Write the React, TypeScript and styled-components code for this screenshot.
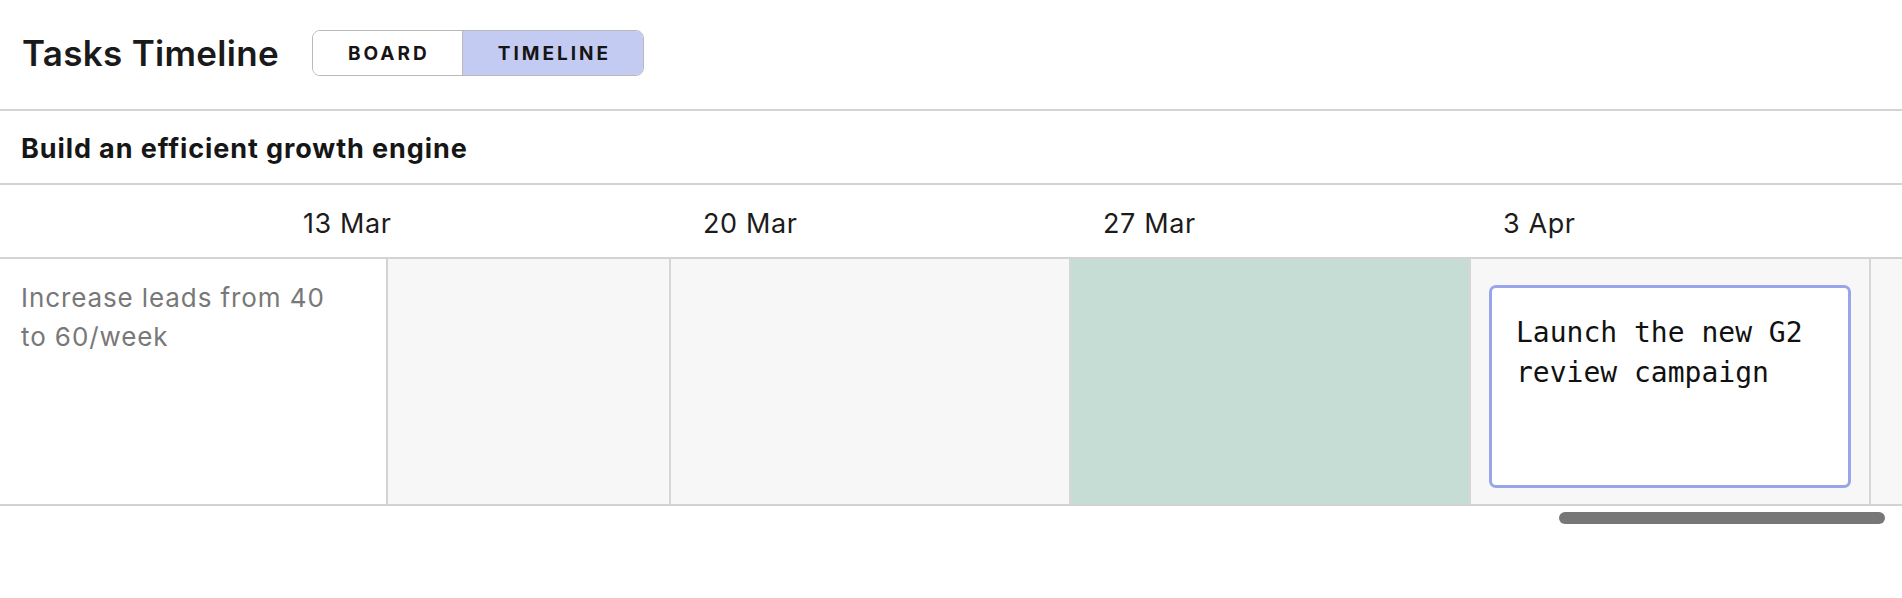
import React from "react";
import styled, { createGlobalStyle } from "styled-components";

const GlobalStyle = createGlobalStyle`
  html, body {
    margin: 0;
    padding: 0;
    background: #ffffff;
  }
  body {
    font-family: Inter, "Noto Sans", "Liberation Sans", sans-serif;
    color: #1a1a1a;
    -webkit-font-smoothing: antialiased;
  }
  * { box-sizing: border-box; }
`;

const Page = styled.div`
  width: 1902px;
  height: 598px;
  overflow: hidden;
  background: #ffffff;
`;

const TopBar = styled.header`
  display: flex;
  align-items: center;
  gap: 33px;
  height: 111px;
  padding: 0 0 3px 22px;
  border-bottom: 2px solid #d3d3d3;
`;

const Title = styled.h1`
  margin: 0;
  font-size: 35px;
  font-weight: 600;
  letter-spacing: 0.3px;
  color: #1a1a1a;
`;

const Toggle = styled.div`
  display: flex;
  height: 46px;
  border: 1.5px solid #b9b9b9;
  border-radius: 8px;
  overflow: hidden;
`;

const ToggleButton = styled.button<{ $active?: boolean }>`
  display: flex;
  align-items: center;
  padding: 0 32px 0 35px;
  border: none;
  border-left: ${(p) => (p.$active ? "1.5px solid #b9b9b9" : "none")};
  background: ${(p) => (p.$active ? "#c3cbf2" : "#ffffff")};
  font-family: Inter, "Noto Sans", sans-serif;
  font-size: 19px;
  font-weight: 700;
  letter-spacing: 3px;
  color: #151515;
  cursor: pointer;
`;

const GoalBar = styled.div`
  display: flex;
  align-items: center;
  height: 74px;
  padding: 2px 0 0 21px;
  border-bottom: 2px solid #d3d3d3;
  font-size: 27px;
  font-weight: 700;
  letter-spacing: 0.9px;
  color: #161616;
`;

const Timeline = styled.section`
  display: flex;
  flex-direction: column;
  overflow: hidden;
`;

const HeaderRow = styled.div`
  display: flex;
  height: 74px;
  border-bottom: 2px solid #d3d3d3;
`;

const Corner = styled.div`
  flex: 0 0 270px;
`;

const DateCell = styled.div`
  flex: 0 0 400px;
  display: flex;
  align-items: center;
  padding: 4px 0 0 33px;
  font-size: 27px;
  font-weight: 400;
  letter-spacing: 0.6px;
  color: #1c1c1c;
`;

const BodyRow = styled.div`
  display: flex;
  height: 247px;
  border-bottom: 2px solid #d3d3d3;
`;

const RowLabel = styled.div`
  flex: 0 0 388px;
  padding: 19px 30px 0 21px;
  border-right: 2px solid #d3d3d3;
  background: #ffffff;
  font-size: 26px;
  letter-spacing: 0.9px;
  line-height: 39px;
  color: #787878;
`;

const WeekCell = styled.div<{ $width: number; $tone: "plain" | "active" }>`
  flex: 0 0 ${(p) => p.$width}px;
  display: flex;
  padding: 26px 18px 16px;
  border-right: 2px solid #d6d6d6;
  background: ${(p) => (p.$tone === "active" ? "#c6ddd6" : "#f7f7f7")};
`;

const TaskCard = styled.div`
  flex: 1;
  padding: 25px 24px 24px;
  border: 3px solid #99a5e8;
  border-radius: 7px;
  background: #ffffff;
  font-family: "DejaVu Sans Mono", "Liberation Mono", monospace;
  font-size: 28px;
  line-height: 40px;
  color: #111111;
`;

const ScrollTrack = styled.div`
  display: flex;
  justify-content: flex-end;
  padding: 6px 17px 0 0;
`;

const ScrollThumb = styled.div`
  width: 326px;
  height: 12px;
  border-radius: 6px;
  background: #777777;
`;

const dates = ["13 Mar", "20 Mar", "27 Mar", "3 Apr", ""];

const weeks: { width: number; tone: "plain" | "active"; task?: string }[] = [
  { width: 283, tone: "plain" },
  { width: 400, tone: "plain" },
  { width: 400, tone: "active" },
  { width: 400, tone: "plain", task: "Launch the new G2 review campaign" },
  { width: 400, tone: "plain" },
];

export default function App() {
  return (
    <Page>
      <GlobalStyle />
      <TopBar>
        <Title>Tasks Timeline</Title>
        <Toggle>
          <ToggleButton>BOARD</ToggleButton>
          <ToggleButton $active>TIMELINE</ToggleButton>
        </Toggle>
      </TopBar>
      <GoalBar>Build an efficient growth engine</GoalBar>
      <Timeline>
        <HeaderRow>
          <Corner />
          {dates.map((d, i) => (
            <DateCell key={i}>{d}</DateCell>
          ))}
        </HeaderRow>
        <BodyRow>
          <RowLabel>Increase leads from 40 to 60/week</RowLabel>
          {weeks.map((w, i) => (
            <WeekCell key={i} $width={w.width} $tone={w.tone}>
              {w.task && <TaskCard>{w.task}</TaskCard>}
            </WeekCell>
          ))}
        </BodyRow>
        <ScrollTrack>
          <ScrollThumb />
        </ScrollTrack>
      </Timeline>
    </Page>
  );
}
